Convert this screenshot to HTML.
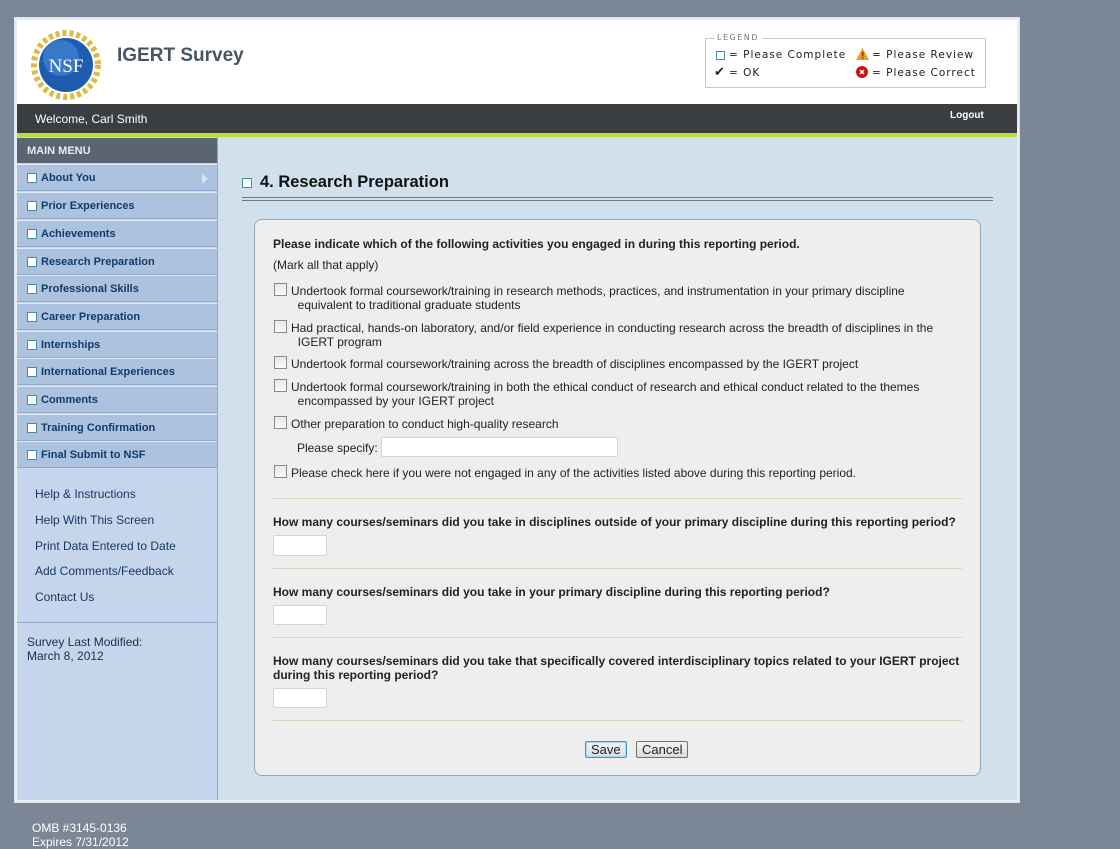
<!DOCTYPE html>
<html><head><meta charset="utf-8"><style>
*{margin:0;padding:0;box-sizing:border-box}
body{width:1120px;height:849px;background:#7b8797;font-family:"Liberation Sans",Arial,sans-serif;position:relative;overflow:hidden;font-size:12px;color:#222}
.a{position:absolute}
.wrap{left:14px;top:17px;width:1006px;height:786px;background:#e9eef3;border:1px solid #d9e1ea}
.hdr{left:17px;top:20px;width:1000px;height:84px;background:#fff}
.bar{left:17px;top:104px;width:1000px;height:29px;background:#3a3e41}
.grn{left:17px;top:133px;width:1000px;height:4px;background:#b3e03a}
.side{left:17px;top:137px;width:201px;height:663px;background:#c5d6ec;border-right:1px solid #8fa8cc}
.main{left:218px;top:137px;width:799px;height:663px;background:#d0e1ed}
.mm{left:17px;top:138px;width:200px;height:25px;background:#5b6472;color:#e8ecf2;font-weight:bold;font-size:11px;padding:7px 0 0 10px}
.mi{left:17px;width:200px;height:27px;background:#adc2de;border-top:1px solid #dfe8f4;border-bottom:1px solid #90a8cc;color:#143a6a;font-weight:bold;font-size:11px;padding:7px 0 0 24px}
.cb{position:absolute;left:10px;top:8px;width:10px;height:10px;background:#fff;border:1px solid #4a8fa0}
.lnk{left:35px;color:#15355f;font-size:12px}
.panel{left:254px;top:219px;width:727px;height:557px;background:#eeeeee;border:1px solid #9aa6b0;border-radius:8px}
.t{position:absolute;font-size:12px;color:#222;line-height:14px}
.b{font-weight:bold}
.ck{position:absolute;left:274px;width:13px;height:13px;border:1px solid #8a8a8a;background:linear-gradient(#e8e8e8,#fafafa)}
.inp{position:absolute;background:#fff;border:1px solid #d4d4d4;border-radius:2px}
.hr{position:absolute;left:273px;width:689px;height:1px;background:#d8d4c0}
.btn{position:absolute;top:741px;height:17px;font-size:13px;font-family:"Liberation Sans",sans-serif;border:1px solid #707070;border-radius:2px;background:linear-gradient(#f4f4f4,#dcdcdc);padding:0 5px;line-height:15px}
.lg{font-family:"DejaVu Sans",sans-serif;font-size:10.5px;letter-spacing:1px;color:#222;position:absolute}
</style></head><body>
<div class="a wrap"></div>
<div class="a hdr"></div>
<svg class="a" style="left:31px;top:30px" width="70" height="70" viewBox="0 0 70 70">
<circle cx="35" cy="35" r="32" fill="none" stroke="#e0b845" stroke-width="6" stroke-dasharray="4 3"/>
<circle cx="35" cy="35" r="27" fill="#1e5cb0"/>
<circle cx="30" cy="28" r="18" fill="#4a8ad8" opacity=".6"/>
<text x="35" y="42" text-anchor="middle" font-family="Liberation Serif,serif" font-size="19" fill="#fff">NSF</text>
</svg>
<div class="a" style="left:117px;top:45px;font-size:19px;font-weight:bold;color:#4a5563">IGERT Survey</div>
<div class="a" style="left:705px;top:38px;width:281px;height:50px;border:1px solid #c8c8c8"></div>
<div class="lg" style="left:714px;top:33px;background:#fff;padding:0 3px;font-size:8px;color:#777;letter-spacing:1.5px">LEGEND</div>
<div class="a" style="left:716px;top:51px;width:9px;height:9px;border:1px solid #3e8fa4"></div>
<div class="lg" style="left:729px;top:49px">= Please Complete</div>
<div class="lg" style="left:714px;top:65px;font-size:13px;letter-spacing:0">✔</div>
<div class="lg" style="left:729px;top:67px">= OK</div>
<svg class="a" style="left:856px;top:48px" width="13" height="12"><polygon points="6.5,0 13,12 0,12" fill="#e8a020"/><rect x="6" y="4" width="1.4" height="4.5" fill="#a02000"/><rect x="6" y="9.5" width="1.4" height="1.4" fill="#a02000"/></svg>
<div class="lg" style="left:872px;top:49px">= Please Review</div>
<svg class="a" style="left:856px;top:66px" width="12" height="12"><circle cx="6" cy="6" r="6" fill="#c01818"/><path d="M4 4L8 8M8 4L4 8" stroke="#fff" stroke-width="1.4"/></svg>
<div class="lg" style="left:872px;top:67px">= Please Correct</div>
<div class="a bar"></div>
<div class="a" style="left:35px;top:112px;color:#fff;font-size:12px">Welcome, Carl Smith</div>
<div class="a" style="left:950px;top:110px;color:#fff;font-size:10px;font-weight:bold">Logout</div>
<div class="a grn"></div>
<div class="a side"></div>
<div class="a main"></div>
<div class="a mm">MAIN MENU</div>
<div class="a mi" style="top:164px"><span class="cb"></span>About You<span style="position:absolute;right:9px;top:9px;border-left:6px solid #dbe5f2;border-top:5px solid transparent;border-bottom:5px solid transparent"></span></div>
<div class="a mi" style="top:192px"><span class="cb"></span>Prior Experiences</div>
<div class="a mi" style="top:220px"><span class="cb"></span>Achievements</div>
<div class="a mi" style="top:248px"><span class="cb"></span>Research Preparation</div>
<div class="a mi" style="top:275px"><span class="cb"></span>Professional Skills</div>
<div class="a mi" style="top:303px"><span class="cb"></span>Career Preparation</div>
<div class="a mi" style="top:331px"><span class="cb"></span>Internships</div>
<div class="a mi" style="top:358px"><span class="cb"></span>International Experiences</div>
<div class="a mi" style="top:386px"><span class="cb"></span>Comments</div>
<div class="a mi" style="top:414px"><span class="cb"></span>Training Confirmation</div>
<div class="a mi" style="top:441px"><span class="cb"></span>Final Submit to NSF</div>
<div class="a lnk" style="top:487px">Help &amp; Instructions</div>
<div class="a lnk" style="top:513px">Help With This Screen</div>
<div class="a lnk" style="top:539px">Print Data Entered to Date</div>
<div class="a lnk" style="top:564px">Add Comments/Feedback</div>
<div class="a lnk" style="top:590px">Contact Us</div>
<div class="a" style="left:17px;top:622px;width:200px;height:1px;background:#8fa8cc"></div>
<div class="a" style="left:27px;top:635px;color:#1c2e4a;font-size:12px;line-height:14px">Survey Last Modified:<br>March 8, 2012</div>
<div class="a" style="left:242px;top:178px;width:10px;height:10px;background:#fff;border:1px solid #3e8fa4"></div>
<div class="a" style="left:260px;top:173px;font-size:16.5px;font-weight:bold;color:#111">4. Research Preparation</div>
<div class="a" style="left:242px;top:197px;width:751px;height:4px;border-top:1px solid #6e7a86;border-bottom:1px solid #6e7a86"></div>
<div class="a panel"></div>
<div class="t b" style="left:273px;top:237px">Please indicate which of the following activities you engaged in during this reporting period.</div>
<div class="t" style="left:273px;top:258px">(Mark all that apply)</div>
<div class="ck" style="top:283px"></div><div class="t" style="left:291px;top:284px">Undertook formal coursework/training in research methods, practices, and instrumentation in your primary discipline<br>&nbsp;&nbsp;equivalent to traditional graduate students</div>
<div class="ck" style="top:320px"></div><div class="t" style="left:291px;top:321px">Had practical, hands-on laboratory, and/or field experience in conducting research across the breadth of disciplines in the<br>&nbsp;&nbsp;IGERT program</div>
<div class="ck" style="top:356px"></div><div class="t" style="left:291px;top:357px">Undertook formal coursework/training across the breadth of disciplines encompassed by the IGERT project</div>
<div class="ck" style="top:379px"></div><div class="t" style="left:291px;top:380px">Undertook formal coursework/training in both the ethical conduct of research and ethical conduct related to the themes<br>&nbsp;&nbsp;encompassed by your IGERT project</div>
<div class="ck" style="top:416px"></div><div class="t" style="left:291px;top:417px">Other preparation to conduct high-quality research</div>
<div class="t" style="left:297px;top:441px">Please specify:</div><div class="inp" style="left:381px;top:437px;width:237px;height:20px"></div>
<div class="ck" style="top:465px"></div><div class="t" style="left:291px;top:466px">Please check here if you were not engaged in any of the activities listed above during this reporting period.</div>
<div class="hr" style="top:498px"></div>
<div class="t b" style="left:273px;top:515px">How many courses/seminars did you take in disciplines outside of your primary discipline during this reporting period?</div>
<div class="inp" style="left:273px;top:535px;width:54px;height:21px"></div>
<div class="hr" style="top:568px"></div>
<div class="t b" style="left:273px;top:585px">How many courses/seminars did you take in your primary discipline during this reporting period?</div>
<div class="inp" style="left:273px;top:605px;width:54px;height:20px"></div>
<div class="hr" style="top:637px"></div>
<div class="t b" style="left:273px;top:654px">How many courses/seminars did you take that specifically covered interdisciplinary topics related to your IGERT project<br>during this reporting period?</div>
<div class="inp" style="left:273px;top:688px;width:54px;height:20px"></div>
<div class="hr" style="top:720px"></div>
<div class="btn" style="left:585px;border-color:#3c9ad0;box-shadow:0 0 0 1px #a8d8f0 inset">Save</div>
<div class="btn" style="left:636px">Cancel</div>
<div class="a" style="left:32px;top:821px;color:#fff;font-size:12px;line-height:14px">OMB #3145-0136<br>Expires 7/31/2012</div>
</body></html>
